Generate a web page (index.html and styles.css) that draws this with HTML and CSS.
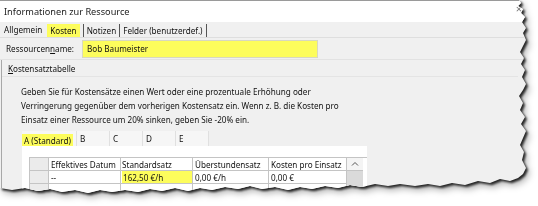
FILE: index.html
```html
<!DOCTYPE html>
<html lang="de">
<head>
<meta charset="utf-8">
<title>Informationen zur Ressource</title>
<link rel="stylesheet" href="styles.css">
</head>
<body>
<div class="frame">
  <div class="dialog">
    <div class="titlebar">
      <span class="title">Informationen zur Ressource</span>
      <span class="close">×</span>
    </div>
    <div class="tabs">
      <span class="tab">Allgemein</span>
      <span class="tab sep"><span class="hl hl-tab">Kosten</span></span>
      <span class="tab sep">Notizen</span>
      <span class="tab sep">Felder (benutzerdef.)</span>
    </div>
    <div class="namerow">
      <span class="label">Ressourcen<u>n</u>ame:</span>
      <span class="input">Bob Baumeister</span>
    </div>
    <div class="group">
      <div class="grouptitle"><u>K</u>ostensatztabelle</div>
      <p class="info">Geben Sie für Kostensätze einen Wert oder eine prozentuale Erhöhung oder<br>Verringerung gegenüber dem vorherigen Kostensatz ein. Wenn z. B. die Kosten pro<br>Einsatz einer Ressource um 20% sinken, geben Sie -20% ein.</p>
      <div class="ratetabs">
        <span class="rtab rtab-a"><span class="hl">A (Standard)</span></span>
        <span class="rtab">B</span>
        <span class="rtab">C</span>
        <span class="rtab">D</span>
        <span class="rtab">E</span>
      </div>
      <div class="panel">
        <div class="grid">
          <div class="cell rh"></div>
          <div class="cell hd c1">Effektives Datum</div>
          <div class="cell hd c2">Standardsatz</div>
          <div class="cell hd c3">Überstundensatz</div>
          <div class="cell hd c4">Kosten pro Einsatz</div>
          <div class="cell sb-up">
            <svg width="8" height="6" viewBox="0 0 8 6"><path d="M1 4.5 L4 1.5 L7 4.5" fill="none" stroke="#555" stroke-width="1"/></svg>
          </div>
          <div class="cell rh"></div>
          <div class="cell c1">--</div>
          <div class="cell c2"><span class="hl hl-cell">162,50 €/h</span></div>
          <div class="cell c3">0,00 €/h</div>
          <div class="cell c4">0,00 €</div>
          <div class="cell sb-track"></div>
          <div class="cell rh"></div>
          <div class="cell c1"></div>
          <div class="cell c2"></div>
          <div class="cell c3"></div>
          <div class="cell c4"></div>
          <div class="cell sb-track"></div>
        </div>
      </div>
    </div>
  </div>
</div>
</body>
</html>
```
FILE: styles.css
```css
* { box-sizing: border-box; }
html, body { margin: 0; padding: 0; background: #ffffff; }
body {
  font-family: "Noto Sans", "Open Sans", sans-serif;
  font-size: 8.15px;
  color: #111;
  width: 538px;
  height: 206px;
  overflow: hidden;
}
.frame {
  width: 538px;
  height: 206px;
  filter: drop-shadow(2px 2px 1px rgba(0,0,0,0.8)) drop-shadow(2px 3px 3px rgba(0,0,0,0.3));
}
.dialog {
  width: 538px;
  height: 206px;
  background: #f0f0f0;
  display: flex;
  flex-direction: column;
  clip-path: polygon(0px 0px, 519px 0px, 521px 3px, 518px 6px, 523px 9px, 521px 13px, 525px 17px, 522px 22px, 526px 28px, 523px 33px, 526px 40px, 523px 46px, 520px 52px, 524px 58px, 521px 64px, 525px 70px, 522px 77px, 526px 84px, 523px 90px, 519px 96px, 523px 103px, 520px 110px, 525px 117px, 521px 124px, 526px 131px, 523px 138px, 520px 145px, 524px 152px, 522px 160px, 526px 168px, 523px 174px, 518px 178px, 510px 181px, 500px 179px, 490px 183px, 478px 181px, 465px 185px, 452px 183px, 440px 186px, 428px 184px, 415px 186px, 400px 184px, 388px 186px, 375px 184px, 362px 187px, 350px 185px, 338px 188px, 325px 186px, 312px 189px, 300px 187px, 288px 190px, 275px 187px, 262px 189px, 250px 186px, 238px 189px, 225px 187px, 212px 190px, 200px 188px, 188px 191px, 175px 188px, 162px 191px, 150px 189px, 138px 192px, 125px 190px, 112px 192px, 100px 190px, 88px 193px, 75px 190px, 62px 192px, 50px 189px, 38px 191px, 25px 188px, 12px 190px, 0px 188px);
}
.titlebar {
  height: 22px;
  flex: none;
  background: #ffffff;
  border-top: 1px solid #9a9a9a;
  display: flex;
  align-items: center;
  justify-content: space-between;
  padding: 0 16px 0 4px;
}
.title { font-size: 9.2px; color: #222; }
.close { font-size: 11px; color: #777; line-height: 1; margin-top: -6px; }
.tabs {
  height: 16px;
  flex: none;
  display: flex;
  align-items: stretch;
  border-bottom: 1px solid #dedede;
  padding-left: 2px;
}
.tab {
  display: flex;
  align-items: center;
  padding: 0 2px;
}
.tab.sep { border-right: 1px solid #555; margin: 2px 0 0 0; padding: 0 3px; }
.hl { background: #fdfd5c; }
.hl-tab { display: flex; align-items: center; height: 100%; padding: 0 3px; }
.namerow {
  height: 22px;
  flex: none;
  display: flex;
  align-items: center;
  padding-left: 6px;
  border-bottom: 1px solid #e2e2e2;
}
.label { width: 76px; }
.input {
  width: 236px;
  height: 18px;
  background: #fdfd5c;
  border: 1px solid #d8d8c0;
  display: flex;
  align-items: center;
  padding-left: 4px;
}
.group {
  flex: 1;
  border-left: 1px solid #a8a8a8;
  margin-left: 1px;
  display: flex;
  flex-direction: column;
}
.grouptitle {
  padding: 3px 0 0 6px;
  height: 17px;
  border-bottom: 1px solid #e4e4e4;
  margin-right: 20px;
}
.info {
  margin: 8px 0 0 19px;
  line-height: 14px;
}
.ratetabs {
  margin: 4px 0 0 20px;
  display: flex;
  height: 15px;
}
.rtab {
  width: 33px;
  background: #f6f6f6;
  border-right: 1px solid #e0e0e0;
  display: flex;
  align-items: center;
  padding-left: 3px;
}
.rtab-a { width: 55px; padding-left: 0; align-items: stretch; }
.rtab-a .hl { display: flex; align-items: center; padding: 0 2px; margin: 3px 0 0 0; }
.panel {
  margin-left: 20px;
  width: 345px;
  flex: 1;
  background: #ffffff;
  padding: 11px 0 0 7px;
}
.grid {
  display: grid;
  grid-template-columns: 20px 72px 72px 76px 78px 16px;
  grid-auto-rows: 13px;
  border-top: 1px solid #c4c4c4;
}
.cell {
  border-right: 1px solid #c4c4c4;
  border-bottom: 1px solid #c4c4c4;
  display: flex;
  align-items: center;
  padding-left: 2px;
  white-space: nowrap;
  overflow: hidden;
}
.rh { background: #ebebeb; border-left: 1px solid #c4c4c4; }
.hd { background: #ffffff; }
.c2 { padding-left: 1px; }
.hl-cell { display: flex; align-items: center; width: 100%; height: 100%; padding-left: 1px; }
.sb-up { justify-content: center; padding-left: 0; background: #f4f4f4; border-right: none; }
.sb-track { background: #dadada; border-right: none; border-bottom: none; }
```
